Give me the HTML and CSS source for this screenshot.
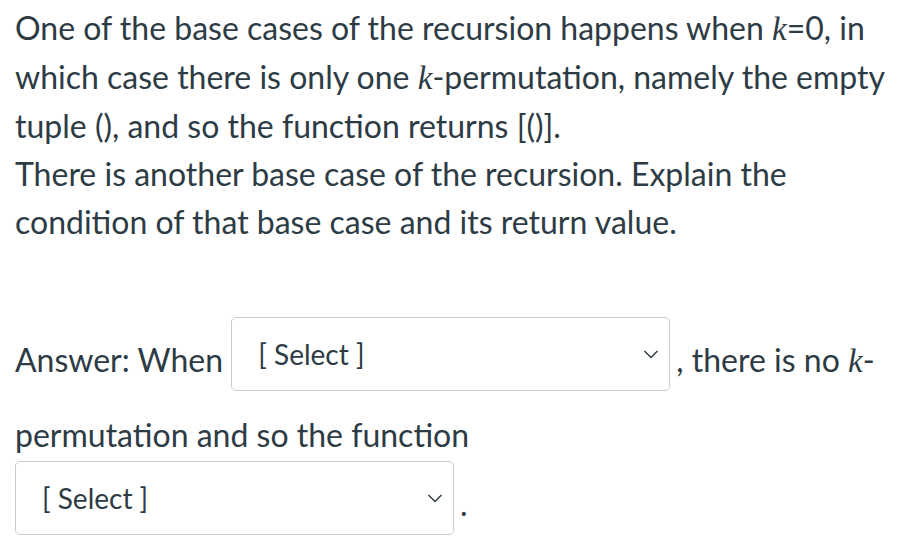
FILE: index.html
```html
<!DOCTYPE html>
<html lang="en">
<head>
<meta charset="utf-8">
<title>Quiz question</title>
<link rel="stylesheet" href="styles.css">
</head>
<body>
<div class="question">
  <p class="text">One of the base cases of the recursion happens when <span class="math">k</span>=0, in which case there is only one <span class="math">k</span>-permutation, namely the empty tuple (), and so the function returns [()].<br>There is another base case of the recursion. Explain the condition of that base case and its return value.</p>
  <p class="answer">Answer: When <span class="select"><span class="select-label">[ Select ]</span><svg class="chev" width="16" height="9" viewBox="0 0 16 9"><polyline points="1.5,1 8,7.5 14.5,1" fill="none" stroke="#2d3b45" stroke-width="1.5"/></svg></span>, there is no <span class="math">k</span>-permutation and so the function <span class="select"><span class="select-label">[ Select ]</span><svg class="chev" width="16" height="9" viewBox="0 0 16 9"><polyline points="1.5,1 8,7.5 14.5,1" fill="none" stroke="#2d3b45" stroke-width="1.5"/></svg></span>.</p>
</div>
</body>
</html>
```

FILE: styles.css
```css
html, body {
  margin: 0;
  padding: 0;
  background: #ffffff;
}

body {
  font-family: Lato, "Noto Sans", sans-serif;
  color: #2d3b45;
  font-size: 32px;
  line-height: 48px;
}

.question {
  padding: 4px 15px 0 15px;
  width: 876px;
}

.text {
  margin: 0;
}

.math {
  font-family: "Liberation Serif", "DejaVu Serif", serif;
  font-style: italic;
  font-size: 33px;
}

.answer {
  margin: 69px 0 0 0;
}

.select {
  display: inline-flex;
  align-items: center;
  justify-content: space-between;
  box-sizing: border-box;
  width: 439px;
  height: 74px;
  padding: 0 10px 0 26px;
  border: 1px solid #c7cdd1;
  border-radius: 5px;
  background: #ffffff;
  vertical-align: 7px;
  margin: 2px 6px 20px 0;
}

.select-label {
  font-size: 28px;
  line-height: 32px;
}

.chev {
  display: block;
}
```
